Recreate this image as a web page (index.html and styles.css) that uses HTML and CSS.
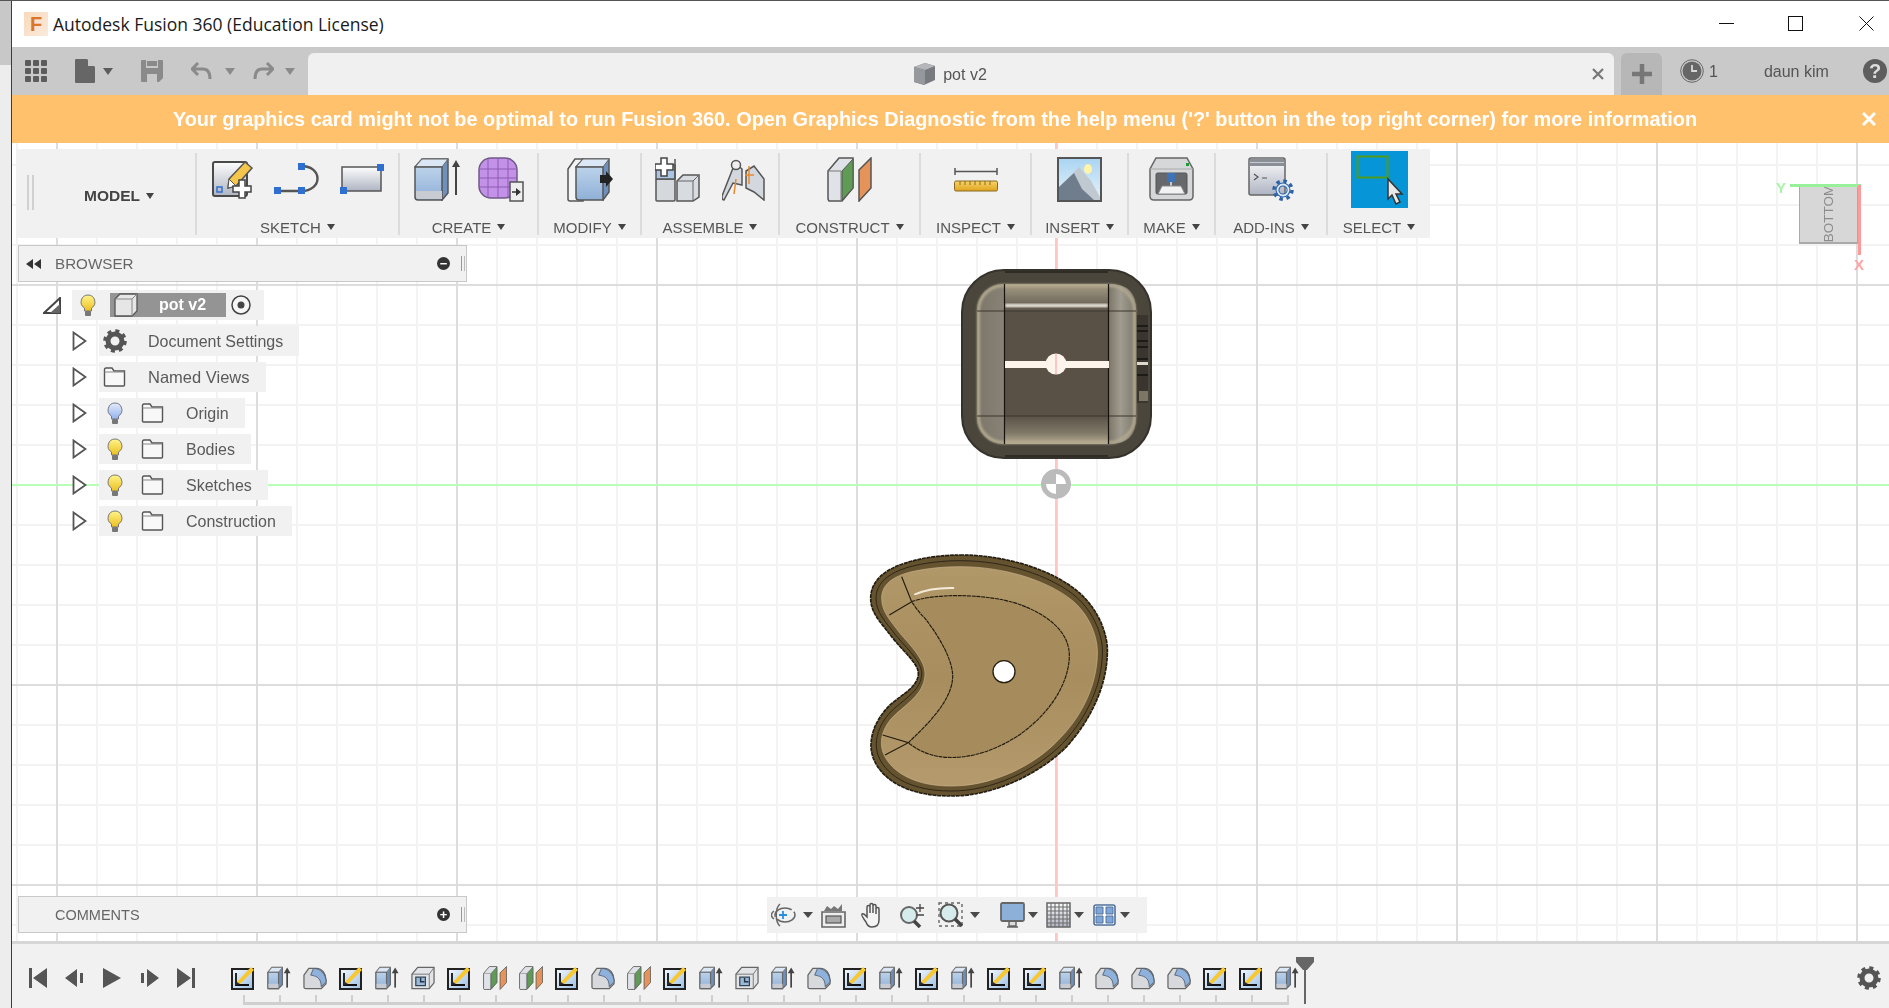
FILE: index.html
```html
<!DOCTYPE html>
<html lang="en">
<head>
<meta charset="utf-8">
<title>Autodesk Fusion 360 (Education License)</title>
<link rel="stylesheet" href="styles.css">
</head>
<body>
<svg class="sprite" aria-hidden="true">
  <defs>
    <linearGradient id="gGrey" x1="0" y1="0" x2="0" y2="1"><stop offset="0" stop-color="#fdfdfd"/><stop offset="1" stop-color="#aeb4c2"/></linearGradient>
    <linearGradient id="gBlue" x1="0" y1="0" x2="0" y2="1"><stop offset="0" stop-color="#bcd2ea"/><stop offset="1" stop-color="#8fb0d8"/></linearGradient>
    <linearGradient id="gSky" x1="0" y1="0" x2="0" y2="1"><stop offset="0" stop-color="#a9d4f2"/><stop offset="1" stop-color="#e8f3fa"/></linearGradient>
    <linearGradient id="gSketch" x1="0" y1="0" x2="1" y2="1"><stop offset="0" stop-color="#f5f8fc"/><stop offset="1" stop-color="#9cc0e6"/></linearGradient>
    <linearGradient id="gBulbY" x1="0" y1="0" x2="0" y2="1"><stop offset="0" stop-color="#fff48a"/><stop offset="1" stop-color="#ecc020"/></linearGradient>
    <linearGradient id="gBulbB" x1="0" y1="0" x2="0" y2="1"><stop offset="0" stop-color="#e4ecfb"/><stop offset="1" stop-color="#94b2ee"/></linearGradient>
    <linearGradient id="gRuler" x1="0" y1="0" x2="0" y2="1"><stop offset="0" stop-color="#f8d468"/><stop offset="1" stop-color="#e0a420"/></linearGradient>
    <linearGradient id="gBody" x1="0" y1="0" x2="0" y2="1"><stop offset="0" stop-color="#b19868"/><stop offset=".5" stop-color="#a88d5e"/><stop offset="1" stop-color="#b49a6c"/></linearGradient>
    <linearGradient id="gPotSide" x1="0" y1="0" x2="1" y2="0"><stop offset="0" stop-color="#7c776a"/><stop offset=".55" stop-color="#a09c8f"/><stop offset="1" stop-color="#7a7466"/></linearGradient>
    <linearGradient id="gPotSideR" x1="0" y1="0" x2="1" y2="0"><stop offset="0" stop-color="#7a7466"/><stop offset=".45" stop-color="#a09c8f"/><stop offset="1" stop-color="#7c776a"/></linearGradient>
    <linearGradient id="gPotTop" x1="0" y1="0" x2="0" y2="1"><stop offset="0" stop-color="#a89e84"/><stop offset=".55" stop-color="#7d7566"/><stop offset="1" stop-color="#5d5549"/></linearGradient>
    <linearGradient id="gPotBot" x1="0" y1="0" x2="0" y2="1"><stop offset="0" stop-color="#5a5247"/><stop offset=".6" stop-color="#7f7868"/><stop offset="1" stop-color="#b8ad92"/></linearGradient>

    <symbol id="i-sketch" viewBox="0 0 42 40">
      <rect x="1" y="3" width="34" height="34" rx="2" fill="url(#gGrey)" stroke="#4a4a4a" stroke-width="2"/>
      <rect x="5" y="28" width="5" height="5" fill="none" stroke="#2f6fd0" stroke-width="1.5"/>
      <path d="M17 20 33 3l7 6-16 18-8 2z" fill="#f5c64a" stroke="#555" stroke-width="1.5"/>
      <path d="M17 20l7 7-8 2z" fill="#fff" stroke="#555"/>
      <path d="M27 21h6v6h6v6h-6v6h-6v-6h-6v-6h6z" fill="#fff" stroke="#444" stroke-width="1.5"/>
    </symbol>
    <symbol id="i-spline" viewBox="0 0 46 33">
      <path d="M3 28H27C49 28 49 3 27 3" fill="none" stroke="#555" stroke-width="2.4"/>
      <rect x="0" y="24" width="7" height="7" fill="#2f6fd0"/>
      <rect x="24" y="24" width="7" height="7" fill="#2f6fd0"/>
      <rect x="24" y="0" width="7" height="7" fill="#2f6fd0"/>
    </symbol>
    <symbol id="i-rect" viewBox="0 0 44 30">
      <rect x="2" y="3" width="39" height="24" fill="url(#gGrey)" stroke="#555" stroke-width="1.5"/>
      <rect x="37" y="0" width="7" height="7" fill="#2f6fd0"/>
      <rect x="0" y="23" width="7" height="7" fill="#2f6fd0"/>
    </symbol>
    <symbol id="i-extrude" viewBox="0 0 47 45">
      <path d="M2 10 9 2H35V36L29 43Z" fill="#6f90ba" stroke="#555" stroke-width="1.5"/>
      <path d="M2 10 9 2H35L29 10Z" fill="#dbe7f5" stroke="#666"/>
      <path d="M2 10H29V43H5Q2 43 2 40Z" fill="url(#gBlue)" stroke="#555" stroke-width="1.5"/>
      <path d="M3 34H29V42H5Q3 42 3 40Z" fill="#c8ccd2"/>
      <path d="M43 38V7" stroke="#444" stroke-width="2"/>
      <path d="M39 10 43 3 47 10Z" fill="#444"/>
    </symbol>
    <symbol id="i-form" viewBox="0 0 47 45">
      <rect x="2" y="1" width="38" height="40" rx="12" fill="#c392e8" stroke="#6f5a86" stroke-width="1.5"/>
      <path d="M2 12H40M2 21H40M2 30H40M11 2V41M21 1V41M31 2V41" stroke="#8a5cb0" fill="none"/>
      <rect x="33" y="25" width="13" height="19" fill="#eee" stroke="#555" stroke-width="1.5"/>
      <path d="M35 35H41" stroke="#333" stroke-width="1.5"/><path d="M39 31 44 35 39 39Z" fill="#333"/>
    </symbol>
    <symbol id="i-modify" viewBox="0 0 46 45">
      <path d="M1 12 8 2H16V44H3Q1 44 1 42Z" fill="#f4f4f4" stroke="#555" stroke-width="1.5"/>
      <path d="M9 10 16 2H42V35L36 43Z" fill="#6f90ba" stroke="#555" stroke-width="1.5"/>
      <path d="M9 10 16 2H42L36 10Z" fill="#dbe7f5" stroke="#666"/>
      <path d="M9 10H36V43H12Q9 43 9 40Z" fill="url(#gBlue)" stroke="#555" stroke-width="1.5"/>
      <path d="M33 18H39V14L46 22 39 30V26H33Z" fill="#222"/>
    </symbol>
    <symbol id="i-assemble" viewBox="0 0 45 45">
      <rect x="1" y="22" width="19" height="22" rx="1" fill="#d5d8dc" stroke="#555" stroke-width="1.5"/>
      <path d="M22 24 28 18H44V40L38 44H22Z" fill="#d8dbe0" stroke="#555" stroke-width="1.5"/>
      <path d="M22 24H38V44M38 24 44 18" fill="none" stroke="#666"/>
      <path d="M1 8H20V22H1Z" fill="#a9c4e4" stroke="#555" stroke-width="1.5"/>
      <path d="M20 2V22" stroke="#555" stroke-width="1.5"/>
      <path d="M6 1h6v6h6v6h-6v6H6v-6H0V7h6z" fill="#fff" stroke="#444" stroke-width="1.5"/>
    </symbol>
    <symbol id="i-joint" viewBox="0 0 43 43">
      <path d="M13 5 20 11V27L11 25 2 42Q0 42 0 38Z" fill="#d3d7de" stroke="#555" stroke-width="1.5"/>
      <circle cx="14" cy="7" r="4.5" fill="#eee" stroke="#555" stroke-width="1.5"/>
      <path d="M24 13 32 8 42 21V42L32 34 24 30Z" fill="#d3d7de" stroke="#555" stroke-width="1.5"/>
      <path d="M14 21 12 36" stroke="#e98a2c" stroke-width="1.5"/>
      <path d="M27 8V26M23 17H32" stroke="#e98a2c" stroke-width="1.5" fill="none"/>
    </symbol>
    <symbol id="i-construct" viewBox="0 0 45 45">
      <path d="M1 14 12 1H26V31L15 44H2L1 42Z" fill="#dfe2e6" stroke="#555" stroke-width="1.5"/>
      <path d="M1 14H14V44" fill="none" stroke="#777"/>
      <path d="M15 14 26 2V31L15 43Z" fill="#5f9b55" stroke="#555"/>
      <path d="M32 13 44 1V31L32 44Z" fill="#e6935a" stroke="#555" stroke-width="1.5"/>
    </symbol>
    <symbol id="i-inspect" viewBox="0 0 44 26">
      <path d="M1 2V9M43 2V9" stroke="#555" stroke-width="1.5"/><path d="M1 5.500H43" stroke="#555" stroke-width="1.5"/>
      <rect x="0.500" y="15" width="43" height="10" rx="1.500" fill="url(#gRuler)" stroke="#8a6a20"/>
      <path d="M6 15V19M11 15V19M16 15V19M21 15V19M26 15V19M31 15V19M36 15V19" stroke="#8a6a20"/>
    </symbol>
    <symbol id="i-insert" viewBox="0 0 45 45">
      <rect x="1" y="1" width="43" height="43" fill="url(#gSky)" stroke="#555" stroke-width="2"/>
      <ellipse cx="31" cy="12" rx="4" ry="5" fill="#fff4a8"/>
      <path d="M2 43V30L22 10 34 24 43 40V43Z" fill="#c0c8d0"/>
      <path d="M2 43V30L17 16 25 32 37 43Z" fill="#6f7d8c"/>
    </symbol>
    <symbol id="i-make" viewBox="0 0 45 45">
      <path d="M7 1H38L44 12V39Q44 43 40 43H5Q1 43 1 39V12Z" fill="#d6d7d9" stroke="#666" stroke-width="1.5"/>
      <path d="M1 12H44" stroke="#aaa"/>
      <rect x="37" y="6" width="3" height="3" fill="#1d9b38"/>
      <rect x="7" y="16" width="31" height="21" rx="1.500" fill="#66686c" stroke="#555"/>
      <rect x="18" y="16" width="8" height="9" fill="#3f73b8"/>
      <path d="M22 25V30" stroke="#bcd" stroke-width="2"/>
      <path d="M13 29H32L36 37H9Z" fill="#f2f2f2" stroke="#888"/>
    </symbol>
    <symbol id="i-addins" viewBox="0 0 47 45">
      <rect x="1" y="1" width="36" height="37" rx="2" fill="url(#gGrey)" stroke="#666" stroke-width="1.5"/>
      <rect x="2" y="2" width="34" height="7" fill="#8a8e96"/><path d="M2 5.500H36" stroke="#c8ccd2"/>
      <path d="M6 17 10 20 6 23M14 21H19" fill="none" stroke="#555" stroke-width="1.2"/>
      <circle cx="35" cy="33" r="5.500" fill="none" stroke="#2f63a8" stroke-width="4"/>
      <circle cx="35" cy="33" r="9" fill="none" stroke="#2f63a8" stroke-width="3.500" stroke-dasharray="3.500 3.570"/>
      <circle cx="35" cy="33" r="5.500" fill="none" stroke="#dbe8f6" stroke-width="1.800"/>
    </symbol>
    <symbol id="i-select" viewBox="0 0 57 57">
      <rect x="6.500" y="5.500" width="30" height="21" fill="none" stroke="#4f9a1c" stroke-width="2"/>
      <path d="M37 28V48L41 44 45 53 49 51 45 43H51Z" fill="#e8e8e8" stroke="#333" stroke-width="1.500"/>
    </symbol>

    <symbol id="i-bulb-y" viewBox="0 0 16 23">
      <path d="M8 1a7 7 0 0 1 3.500 13V17h-7v-3A7 7 0 0 1 8 1z" fill="url(#gBulbY)" stroke="#777"/>
      <rect x="5" y="17" width="6" height="5" rx="1" fill="#777"/>
    </symbol>
    <symbol id="i-bulb-b" viewBox="0 0 16 23">
      <path d="M8 1a7 7 0 0 1 3.500 13V17h-7v-3A7 7 0 0 1 8 1z" fill="url(#gBulbB)" stroke="#778"/>
      <rect x="5" y="17" width="6" height="5" rx="1" fill="#777"/>
    </symbol>
    <symbol id="i-folder" viewBox="0 0 23 20">
      <path d="M1.500 2.500Q1.500 1 3 1H9L11 4H21.500V18Q21.500 19 20.500 19H2.500Q1.500 19 1.500 18Z" fill="#f8f8f8" stroke="#555" stroke-width="1.400"/>
      <path d="M1.500 5H21.500" stroke="#888"/>
    </symbol>
    <symbol id="i-gear" viewBox="0 0 24 24">
      <circle cx="12" cy="12" r="7" fill="none" stroke="currentColor" stroke-width="5"/>
      <circle cx="12" cy="12" r="10.200" fill="none" stroke="currentColor" stroke-width="3.200" stroke-dasharray="4 4.010"/>
    </symbol>

    <symbol id="t-sketch" viewBox="0 0 24 24">
      <rect x="1" y="3" width="21" height="20" fill="url(#gSketch)" stroke="#222" stroke-width="2"/>
      <path d="M5 7V19H18" fill="none" stroke="#111" stroke-width="1.800"/>
      <path d="M6 16 20 1l3 3L9 18Z" fill="#f8c82e"/>
      <path d="M6 16 9 18 5 19Z" fill="#333"/>
    </symbol>
    <symbol id="t-extrude" viewBox="0 0 25 24">
      <path d="M1 6 5 1H16V19L12 23H1Z" fill="#6f90ba" stroke="#666" stroke-width="1.200"/>
      <path d="M1 6 5 1H16L12 6Z" fill="#dbe7f5" stroke="#777" stroke-width=".8"/>
      <path d="M1 6H12V23H2Q1 23 1 22Z" fill="url(#gBlue)" stroke="#666" stroke-width="1.200"/>
      <path d="M1.600 18H12V22.400H1.600Z" fill="#c8ccd2"/>
      <path d="M21 22V5" stroke="#444" stroke-width="1.800"/>
      <path d="M17.500 7 21 1 24.500 7Z" fill="#444"/>
    </symbol>
    <symbol id="t-fillet" viewBox="0 0 25 24">
      <path d="M1 9 6 2H14C20 2 24 8 24 14V18L19 23H3Q1 23 1 21Z" fill="#d7d9dd" stroke="#666" stroke-width="1.300"/>
      <path d="M11 2C18 2 24 8 24 16L19 21C19 14 16 10 8 9Z" fill="#8fb2dc" stroke="#567"/>
    </symbol>
    <symbol id="t-shell" viewBox="0 0 25 24">
      <path d="M1 8 7 1H24V17L19 23H1Z" fill="#e2e4e8" stroke="#666" stroke-width="1.300"/>
      <path d="M1 8H19V23M19 8 24 1" fill="none" stroke="#777"/>
      <path d="M5 11H15V20H5Z" fill="#9cb8d8" stroke="#345" stroke-width="1.300"/>
      <path d="M10 12V16H14" fill="none" stroke="#234" stroke-width="1.500"/>
    </symbol>
    <filter id="fSoft" x="-10%" y="-10%" width="120%" height="120%"><feGaussianBlur stdDeviation="1"/></filter>
  </defs>
</svg>

<div class="desktop-edge"></div>
<div class="window">
  <header class="titlebar">
    <span class="app-logo">F</span>
    <span class="title-text">Autodesk Fusion 360 (Education License)</span>
    <div class="win-controls">
      <svg class="wc" viewBox="0 0 15 15"><path d="M0 7.500H15" stroke="#111" fill="none"/></svg>
      <svg class="wc wc-mid" viewBox="0 0 15 15"><rect x=".5" y=".5" width="14" height="14" stroke="#111" fill="none"/></svg>
      <svg class="wc" viewBox="0 0 15 15"><path d="M.5.5 14.500 14.500M14.500.5.5 14.500" stroke="#111" fill="none"/></svg>
    </div>
  </header>

  <div class="appbar">
    <svg class="ab-grid" viewBox="0 0 22 22" fill="#5c5c5c">
      <rect width="6" height="6" rx="1"/><rect x="8" width="6" height="6" rx="1"/><rect x="16" width="6" height="6" rx="1"/>
      <rect y="8" width="6" height="6" rx="1"/><rect x="8" y="8" width="6" height="6" rx="1"/><rect x="16" y="8" width="6" height="6" rx="1"/>
      <rect y="16" width="6" height="6" rx="1"/><rect x="8" y="16" width="6" height="6" rx="1"/><rect x="16" y="16" width="6" height="6" rx="1"/>
    </svg>
    <svg class="ab-file" viewBox="0 0 20 24"><path d="M1 0H12L20 8V23Q20 24 19 24H1Q0 24 0 23V1Q0 0 1 0Z" fill="#666"/><path d="M13 0 20 7H13Z" fill="#c8c8c8"/></svg>
    <span class="caret caret-ab ab-c1"></span>
    <svg class="ab-save" viewBox="0 0 22 22"><path d="M1 0H21Q22 0 22 1V18L18 22H1Q0 22 0 21V1Q0 0 1 0Z" fill="#8a8a8a"/><rect x="5" y="0" width="12" height="8" fill="#c8c8c8"/><rect x="6" y="1" width="10" height="5" fill="#8a8a8a"/><rect x="6" y="14" width="10" height="8" fill="#c8c8c8"/></svg>
    <svg class="ab-undo" viewBox="0 0 21 18"><path d="M7 1 1 7 7 13M2 7H12C17 7 19 11 19 17" fill="none" stroke="#8a8a8a" stroke-width="3"/></svg>
    <span class="caret caret-ab caret-dim ab-c2"></span>
    <svg class="ab-redo" viewBox="0 0 21 18"><path d="M14 1 20 7 14 13M19 7H9C4 7 2 11 2 17" fill="none" stroke="#8a8a8a" stroke-width="3"/></svg>
    <span class="caret caret-ab caret-dim ab-c3"></span>
    <div class="tab">
      <span></span>
      <div class="tab-title">
        <svg class="tab-cube" viewBox="0 0 24 24"><path d="M2 5 13 1 23 4V18L12 23 2 20Z" fill="#777b80"/><path d="M2 5 13 8 23 4 13 1Z" fill="#b4b6b9"/><path d="M2 5 13 8V23L2 20Z" fill="#95989c"/></svg>
        <span>pot v2</span>
      </div>
      <svg class="tab-close" viewBox="0 0 12 12"><path d="M1 1 11 11M11 1 1 11" stroke="#777" stroke-width="2.200" fill="none"/></svg>
    </div>
    <div class="tab-add"><svg viewBox="0 0 20 20"><path d="M10 0V20M0 10H20" stroke="#777" stroke-width="4.500"/></svg></div>
    <svg class="ab-clock" viewBox="0 0 24 24"><circle cx="12" cy="12" r="11.300" fill="none" stroke="#666"/><circle cx="12" cy="12" r="9.500" fill="#666"/><path d="M12 6V12H17" fill="none" stroke="#d8d8d8" stroke-width="1.800"/></svg>
    <span class="ab-count">1</span>
    <span class="ab-user">daun kim</span>
    <span class="ab-help">?</span>
  </div>

  <div class="banner">
    <p class="banner-text">Your graphics card might not be optimal to run Fusion 360. Open Graphics Diagnostic from the help menu ('?' button in the top right corner) for more information</p>
    <svg class="banner-close" viewBox="0 0 14 14"><path d="M1 1 13 13M13 1 1 13" stroke="#fff" stroke-width="3" fill="none"/></svg>
  </div>

  <main class="viewport">
    <div class="axis axis-y"></div>
    <div class="axis axis-x"></div>

    <svg class="model model-pot" viewBox="0 0 191 190">
      <rect x="1" y="1" width="189" height="188" rx="42" fill="#4b463c" stroke="#35322b" stroke-width="2"/>
      <path d="M44 3H147" stroke="#2f2c26" stroke-width="2"/><path d="M44 187H147" stroke="#2f2c26" stroke-width="2"/>
      <rect x="16" y="15" width="159" height="160" rx="26" fill="url(#gPotSide)"/>
      <path d="M147 15H149Q175 15 175 41V149Q175 175 149 175H147Z" fill="url(#gPotSideR)"/>
      <rect x="44" y="15" width="103" height="27" fill="url(#gPotTop)"/>
      <rect x="44" y="35" width="103" height="3" fill="#f4f0e6" filter="url(#fSoft)"/>
      <rect x="44" y="42" width="103" height="105" fill="#595146"/>
      <rect x="44" y="147" width="103" height="28" fill="url(#gPotBot)"/>
      <rect x="17.500" y="16.500" width="156" height="157" rx="25" fill="none" stroke="#b3a98f" stroke-width="3" filter="url(#fSoft)"/>
      <path d="M16 42H175M16 147H175" stroke="#3a362e" stroke-width="1"/>
      <path d="M43.500 15V175M147.500 15V175" stroke="#16130f" stroke-width="1.200"/>
      <rect x="44" y="92" width="104" height="7" fill="#fdf5ec"/>
      <circle cx="95" cy="95" r="10.500" fill="#fdf5ec"/>
      <path d="M95 85V105" stroke="#ffc4c4" stroke-width="2"/>
      <rect x="176" y="46" width="11" height="88" fill="#3a362f"/>
      <path d="M176 57H187M176 62H187M176 72H187M176 78H187M176 90H187M176 106H187" stroke="#1d1b17" stroke-width="2"/>
      <rect x="176" y="93" width="11" height="3" fill="#ddd9cc"/>
      <rect x="178" y="122" width="9" height="10" fill="#7d7566"/>
    </svg>

    <svg class="model model-origin" viewBox="0 0 30 30">
      <circle cx="15" cy="15" r="12.500" fill="#fff" stroke="#bbb" stroke-width="5"/>
      <path d="M15 15V2A13 13 0 0 0 2 15ZM15 15V28A13 13 0 0 0 28 15Z" fill="#bbb"/>
    </svg>

    <svg class="model model-kidney" viewBox="0 0 840 810">
      <path d="M330 45C470 45 610 90 690 160C750 215 775 290 772 340C770 430 730 530 650 620C570 700 430 770 300 768C190 768 100 730 70 655C50 600 75 540 120 495C160 460 205 440 205 400C205 370 160 335 125 290C95 250 62 220 62 175C62 120 110 85 170 68C220 52 280 45 330 45Z" fill="#65522f" stroke="#231d10" stroke-width="5" stroke-dasharray="12 2"/>
      <path d="M330 62C465 62 600 105 678 170C735 220 760 292 757 342C755 428 718 525 638 610C560 690 425 755 300 753C195 753 112 715 85 648C68 600 88 548 130 508C170 472 215 448 215 400C215 365 170 325 137 285C107 245 78 218 78 175C78 128 118 98 177 81C225 68 280 62 330 62Z" fill="none" stroke="#2e2718" stroke-width="3"/>
      <path d="M330 80C460 80 590 120 665 180C720 225 745 295 742 345C740 425 705 520 625 600C550 680 420 740 300 738C200 738 125 700 100 640C85 600 100 555 140 520C180 485 225 455 225 400C225 360 180 315 150 280C120 240 95 215 95 175C95 135 125 110 185 95C230 85 280 80 330 80Z" fill="url(#gBody)" stroke="#c9b48e" stroke-width="2"/>
      <path d="M185 185C250 160 400 160 500 190C600 225 660 280 658 350C655 440 590 530 500 590C420 640 340 660 270 650C230 645 195 625 175 608C230 555 310 480 308 405C305 350 260 280 225 235C205 215 195 200 185 185Z" fill="#a68b5c" stroke="#231d10" stroke-width="3.500" stroke-dasharray="12 2"/>
      <path d="M155 110 185 185 118 225M98 585 175 608 105 645" fill="none" stroke="#231d10" stroke-width="3.500"/>
      <path d="M195 163C230 148 270 143 310 144" fill="none" stroke="#f3ead8" stroke-width="6" stroke-linecap="round" filter="url(#fSoft)"/>
      <circle cx="462" cy="395" r="33" fill="#fff" stroke="#231d10" stroke-width="4"/>
    </svg>

    <div class="viewcube">
      <div class="vc-face"><span class="vc-text">BOTTOM</span></div>
      <span class="vc-line-y"></span>
      <span class="vc-line-x"></span>
      <span class="vc-y">Y</span>
      <span class="vc-x">X</span>
    </div>

    <nav class="toolbar">
      <div class="tb-group tb-model">
        <span class="grip"></span>
        <span class="model-label">MODEL</span>
        <span class="caret caret-sm"></span>
      </div>
      <span class="tb-sep"></span>
      <div class="tb-group w-sketch">
        <div class="tb-icons gap20">
          <svg class="ic w42 h40"><use href="#i-sketch"/></svg>
          <svg class="ic w46 h33"><use href="#i-spline"/></svg>
          <svg class="ic w44 h30"><use href="#i-rect"/></svg>
        </div>
        <div class="tb-label">SKETCH<span class="caret caret-sm"></span></div>
      </div>
      <span class="tb-sep"></span>
      <div class="tb-group w-create">
        <div class="tb-icons gap17">
          <svg class="ic w47 h45"><use href="#i-extrude"/></svg>
          <svg class="ic w47 h45"><use href="#i-form"/></svg>
        </div>
        <div class="tb-label">CREATE<span class="caret caret-sm"></span></div>
      </div>
      <span class="tb-sep"></span>
      <div class="tb-group w-modify">
        <div class="tb-icons"><svg class="ic w46 h45"><use href="#i-modify"/></svg></div>
        <div class="tb-label">MODIFY<span class="caret caret-sm"></span></div>
      </div>
      <span class="tb-sep"></span>
      <div class="tb-group w-assemble">
        <div class="tb-icons gap22">
          <svg class="ic w45 h45"><use href="#i-assemble"/></svg>
          <svg class="ic w43 h43"><use href="#i-joint"/></svg>
        </div>
        <div class="tb-label">ASSEMBLE<span class="caret caret-sm"></span></div>
      </div>
      <span class="tb-sep"></span>
      <div class="tb-group w-construct">
        <div class="tb-icons"><svg class="ic w45 h45"><use href="#i-construct"/></svg></div>
        <div class="tb-label">CONSTRUCT<span class="caret caret-sm"></span></div>
      </div>
      <span class="tb-sep"></span>
      <div class="tb-group w-inspect">
        <div class="tb-icons"><svg class="ic w44 h26"><use href="#i-inspect"/></svg></div>
        <div class="tb-label">INSPECT<span class="caret caret-sm"></span></div>
      </div>
      <span class="tb-sep"></span>
      <div class="tb-group w-insert">
        <div class="tb-icons"><svg class="ic w45 h45"><use href="#i-insert"/></svg></div>
        <div class="tb-label">INSERT<span class="caret caret-sm"></span></div>
      </div>
      <span class="tb-sep"></span>
      <div class="tb-group w-make">
        <div class="tb-icons"><svg class="ic w45 h45"><use href="#i-make"/></svg></div>
        <div class="tb-label">MAKE<span class="caret caret-sm"></span></div>
      </div>
      <span class="tb-sep"></span>
      <div class="tb-group w-addins">
        <div class="tb-icons"><svg class="ic w47 h45"><use href="#i-addins"/></svg></div>
        <div class="tb-label">ADD-INS<span class="caret caret-sm"></span></div>
      </div>
      <span class="tb-sep"></span>
      <div class="tb-group w-select">
        <div class="tb-icons"><svg class="ic select-tile"><use href="#i-select"/></svg></div>
        <div class="tb-label">SELECT<span class="caret caret-sm"></span></div>
      </div>
    </nav>

    <aside class="browser">
      <div class="panel-head">
        <svg class="ph-back" viewBox="0 0 15 10"><path d="M7 0V10L0 5ZM15 0V10L8 5Z" fill="#333"/></svg>
        <span class="ph-title">BROWSER</span>
        <span class="ph-btn">&#8722;</span>
        <span class="ph-grip"></span>
      </div>
      <ul class="tree">
        <li class="tree-root">
          <svg class="root-tri" viewBox="0 0 18 17"><path d="M17 1V16H1Z" fill="#fff" stroke="#444" stroke-width="2"/><path d="M17 7V16H7Z" fill="#666"/></svg>
          <div class="pill pill-root">
            <svg class="bulb"><use href="#i-bulb-y"/></svg>
            <div class="root-label">
              <svg class="root-cube" viewBox="0 0 24 24"><path d="M1 6 6 1H23V18L18 23H1Z" fill="#e6e6e6" stroke="#555" stroke-width="1.300"/><path d="M1 6H18V23M18 6 23 1" fill="none" stroke="#888"/></svg>
              <span>pot v2</span>
            </div>
            <svg class="radio" viewBox="0 0 20 20"><circle cx="10" cy="10" r="9" fill="#f6f6f6" stroke="#444" stroke-width="1.500"/><circle cx="10" cy="10" r="3.500" fill="#444"/></svg>
          </div>
        </li>
        <li class="tree-row">
          <svg class="expander" viewBox="0 0 15 20"><path d="M1.500 1.500 13.500 10 1.500 18.500Z" fill="#fff" stroke="#555" stroke-width="1.800"/></svg>
          <div class="pill">
            <svg class="row-gear"><use href="#i-gear"/></svg>
            <span class="row-text after-plain">Document Settings</span>
          </div>
        </li>
        <li class="tree-row">
          <svg class="expander" viewBox="0 0 15 20"><path d="M1.500 1.500 13.500 10 1.500 18.500Z" fill="#fff" stroke="#555" stroke-width="1.800"/></svg>
          <div class="pill">
            <svg class="folder folder-first"><use href="#i-folder"/></svg>
            <span class="row-text after-folder1">Named Views</span>
          </div>
        </li>
        <li class="tree-row">
          <svg class="expander" viewBox="0 0 15 20"><path d="M1.500 1.500 13.500 10 1.500 18.500Z" fill="#fff" stroke="#555" stroke-width="1.800"/></svg>
          <div class="pill">
            <svg class="bulb"><use href="#i-bulb-b"/></svg>
            <svg class="folder"><use href="#i-folder"/></svg>
            <span class="row-text after-folder">Origin</span>
          </div>
        </li>
        <li class="tree-row">
          <svg class="expander" viewBox="0 0 15 20"><path d="M1.500 1.500 13.500 10 1.500 18.500Z" fill="#fff" stroke="#555" stroke-width="1.800"/></svg>
          <div class="pill">
            <svg class="bulb"><use href="#i-bulb-y"/></svg>
            <svg class="folder"><use href="#i-folder"/></svg>
            <span class="row-text after-folder">Bodies</span>
          </div>
        </li>
        <li class="tree-row">
          <svg class="expander" viewBox="0 0 15 20"><path d="M1.500 1.500 13.500 10 1.500 18.500Z" fill="#fff" stroke="#555" stroke-width="1.800"/></svg>
          <div class="pill">
            <svg class="bulb"><use href="#i-bulb-y"/></svg>
            <svg class="folder"><use href="#i-folder"/></svg>
            <span class="row-text after-folder">Sketches</span>
          </div>
        </li>
        <li class="tree-row">
          <svg class="expander" viewBox="0 0 15 20"><path d="M1.500 1.500 13.500 10 1.500 18.500Z" fill="#fff" stroke="#555" stroke-width="1.800"/></svg>
          <div class="pill">
            <svg class="bulb"><use href="#i-bulb-y"/></svg>
            <svg class="folder"><use href="#i-folder"/></svg>
            <span class="row-text after-folder">Construction</span>
          </div>
        </li>
      </ul>
    </aside>

    <aside class="comments panel-head">
      <span class="ph-title ph-title-comments">COMMENTS</span>
      <span class="ph-btn">+</span>
      <span class="ph-grip"></span>
    </aside>

    <div class="navbar">
      <svg class="nv" viewBox="0 0 25 26"><ellipse cx="14" cy="13" rx="10" ry="7" fill="none" stroke="#666" stroke-width="1.500" stroke-dasharray="22 3"/><path d="M9 2C4 6 4 20 9 24" fill="none" stroke="#666" stroke-width="1.500"/><path d="M3 9C-1 12 0 15 3 17" fill="none" stroke="#666" stroke-width="1.500"/><path d="M12 9V17M8 13H16" stroke="#2a8ee0" stroke-width="1.800"/></svg>
      <span class="caret caret-nav ml7"></span>
      <svg class="nv ml8" viewBox="0 0 25 26"><path d="M1 10H24V25H1Z" fill="#eee" stroke="#666" stroke-width="1.600"/><path d="M3 9 6 4 10 7 13 4 17 7 21 2V9Z" fill="#777"/><rect x="5" y="14" width="15" height="7" fill="#aaa" stroke="#555" stroke-width="1.200"/></svg>
      <svg class="nv ml14" viewBox="0 0 25 26"><path d="M6 20C3 16 1 13 2 12C4 11 5 13 7 15V5C7 3 10 3 10 5V11V3C10 1 13 1 13 3V11V4C13 2 16 2 16 4V12V7C16 5 19 5 19 7V18C19 22 17 25 12 25C9 25 7 23 6 20Z" fill="#f4f4f4" stroke="#555" stroke-width="1.500"/></svg>
      <svg class="nv ml14" viewBox="0 0 25 26"><circle cx="10" cy="13" r="8" fill="#d6ecec" stroke="#666" stroke-width="2"/><path d="M15 19 21 25" stroke="#444" stroke-width="3.500"/><path d="M21 2V10M17 6H25M17 13H25" stroke="#444" stroke-width="1.300"/></svg>
      <svg class="nv ml14" viewBox="0 0 25 26"><path d="M1 1H24V24H1Z" fill="none" stroke="#666" stroke-dasharray="3 3" stroke-width="1.400"/><circle cx="11" cy="11" r="8.500" fill="#d6ecec" stroke="#555" stroke-width="2"/><path d="M17 17 24 24" stroke="#444" stroke-width="3.500"/></svg>
      <span class="caret caret-nav ml7"></span>
      <svg class="nv ml20" viewBox="0 0 25 26"><rect x="1" y="1" width="23" height="18" rx="1.500" fill="#8cb0d8" stroke="#666" stroke-width="1.800"/><path d="M9 20V24H16V20M7 25H18" fill="#ddd" stroke="#666" stroke-width="1.500"/></svg>
      <span class="caret caret-nav ml3"></span>
      <svg class="nv ml8" viewBox="0 0 25 26"><rect x="1" y="1" width="23" height="24" fill="url(#gGrey)" stroke="#666" stroke-width="1.500"/><path d="M5 1V25M9 1V25M13 1V25M17 1V25M21 1V25M1 5H24M1 9H24M1 13H24M1 17H24M1 21H24" stroke="#6d6d6d" stroke-width="1.100" fill="none"/></svg>
      <span class="caret caret-nav ml3"></span>
      <svg class="nv nv-views ml9" viewBox="0 0 23 22"><rect x="1" y="1" width="21" height="20" rx="2" fill="#fff" stroke="#51719c" stroke-width="1.600"/><path d="M3 3H10V10H3ZM13 3H20V10H13ZM3 12H10V19H3ZM13 12H20V19H13Z" fill="#7ea6d8" stroke="#51719c"/></svg>
      <span class="caret caret-nav ml4"></span>
    </div>
  </main>

  <footer class="timeline">
    <div class="playback">
      <svg class="pb" viewBox="0 0 18 20"><path d="M0 0H3V20H0ZM18 0V20L4 10Z" fill="#555"/></svg>
      <svg class="pb pb-wide" viewBox="0 0 20 20"><path d="M12 1V19L0 10ZM15 5H18V15H15Z" fill="#555"/></svg>
      <svg class="pb" viewBox="0 0 18 20"><path d="M0 0 18 10 0 20Z" fill="#555"/></svg>
      <svg class="pb pb-wide" viewBox="0 0 20 20"><path d="M8 1 20 10 8 19ZM2 5H5V15H2Z" fill="#555"/></svg>
      <svg class="pb" viewBox="0 0 18 20"><path d="M15 0H18V20H15ZM0 0 14 10 0 20Z" fill="#555"/></svg>
    </div>
    <div class="track">
      <div class="tl-items">
        <svg class="ti"><use href="#t-sketch"/></svg>
        <svg class="ti"><use href="#t-extrude"/></svg>
        <svg class="ti"><use href="#t-fillet"/></svg>
        <svg class="ti"><use href="#t-sketch"/></svg>
        <svg class="ti"><use href="#t-extrude"/></svg>
        <svg class="ti"><use href="#t-shell"/></svg>
        <svg class="ti"><use href="#t-sketch"/></svg>
        <svg class="ti"><use href="#i-construct"/></svg>
        <svg class="ti"><use href="#i-construct"/></svg>
        <svg class="ti"><use href="#t-sketch"/></svg>
        <svg class="ti"><use href="#t-fillet"/></svg>
        <svg class="ti"><use href="#i-construct"/></svg>
        <svg class="ti"><use href="#t-sketch"/></svg>
        <svg class="ti"><use href="#t-extrude"/></svg>
        <svg class="ti"><use href="#t-shell"/></svg>
        <svg class="ti"><use href="#t-extrude"/></svg>
        <svg class="ti"><use href="#t-fillet"/></svg>
        <svg class="ti"><use href="#t-sketch"/></svg>
        <svg class="ti"><use href="#t-extrude"/></svg>
        <svg class="ti"><use href="#t-sketch"/></svg>
        <svg class="ti"><use href="#t-extrude"/></svg>
        <svg class="ti"><use href="#t-sketch"/></svg>
        <svg class="ti"><use href="#t-sketch"/></svg>
        <svg class="ti"><use href="#t-extrude"/></svg>
        <svg class="ti"><use href="#t-fillet"/></svg>
        <svg class="ti"><use href="#t-fillet"/></svg>
        <svg class="ti"><use href="#t-fillet"/></svg>
        <svg class="ti"><use href="#t-sketch"/></svg>
        <svg class="ti"><use href="#t-sketch"/></svg>
        <svg class="ti"><use href="#t-extrude"/></svg>
      </div>
      <div class="tl-rail"></div>
      <svg class="tl-marker" viewBox="0 0 18 47"><path d="M0 0H18V5L11 13H10V47H8V13H7L0 5Z" fill="#666"/></svg>
    </div>
    <svg class="tl-gear"><use href="#i-gear"/></svg>
  </footer>
</div>
</body>
</html>
```

FILE: styles.css
```css
* { box-sizing: border-box; }

html, body {
  margin: 0;
  width: 1889px;
  height: 1008px;
  overflow: hidden;
}

body {
  display: flex;
  font-family: "Liberation Sans", Arial, sans-serif;
  color: #555;
  background: #efefef;
  border-top: 1px solid #555;
}

.sprite {
  position: absolute;
  width: 0;
  height: 0;
}

.desktop-edge {
  flex: 0 0 11px;
  background: linear-gradient(#c8c8c8 0 64px, #ededed 64px);
}

.window {
  flex: 1;
  min-width: 0;
  display: flex;
  flex-direction: column;
  border-left: 1px solid #3c3c3c;
  background: #fff;
}

/* Title bar */
.titlebar {
  flex: 0 0 46px;
  display: flex;
  align-items: center;
  padding: 0 15px 0 12px;
  background: #fff;
}

.app-logo {
  width: 24px;
  height: 24px;
  margin-right: 5px;
  background: linear-gradient(135deg, #f8d9bd, #fbeadc);
  color: #d9762a;
  font: bold 20px/24px "Liberation Sans", sans-serif;
  text-align: center;
}

.title-text {
  font-family: "Open Sans", "Noto Sans", sans-serif;
  font-size: 17.5px;
  color: #1a1a1a;
  white-space: nowrap;
}

.win-controls {
  margin-left: auto;
  display: flex;
  align-items: center;
  transform: translateY(-1px);
}

.wc { width: 15px; height: 15px; }
.wc-mid { margin: 0 56px 0 54px; }

/* App bar */
.appbar {
  flex: 0 0 48px;
  display: flex;
  align-items: center;
  padding-left: 13px;
  background: #c9c9c9;
  filter: blur(.35px);
}

.ab-grid { width: 22px; height: 22px; }
.ab-file { width: 20px; height: 24px; margin-left: 28px; }
.ab-c1 { margin-left: 8px; }
.ab-save { width: 22px; height: 22px; margin-left: 28px; }
.ab-undo { width: 21px; height: 18px; margin-left: 28px; }
.ab-c2 { margin-left: 13px; }
.ab-redo { width: 21px; height: 18px; margin-left: 18px; }
.ab-c3 { margin-left: 11px; }

.tab {
  align-self: flex-end;
  width: 1306px;
  height: 42px;
  margin-left: 13px;
  display: grid;
  grid-template-columns: 1fr auto 1fr;
  align-items: center;
  background: #f0f0f0;
  border-radius: 6px 6px 0 0;
}

.tab-title {
  display: flex;
  align-items: center;
  gap: 7px;
  margin-right: 23px;
  font-size: 16px;
  color: #555;
}

.tab-title span { padding-top: 2px; }

.tab-cube { width: 24px; height: 24px; }
.tab-close { width: 12px; height: 12px; justify-self: end; margin-right: 10px; }

.tab-add {
  align-self: flex-end;
  width: 41px;
  height: 42px;
  margin-left: 7px;
  display: flex;
  align-items: center;
  justify-content: center;
  background: #b7b7b7;
  border-radius: 6px 6px 0 0;
}

.tab-add svg { width: 20px; height: 20px; }

.ab-clock { width: 24px; height: 24px; margin-left: 18px; }
.ab-count { margin-left: 5px; padding-top: 1px; font-size: 16px; color: #555; }
.ab-user { margin-left: 46px; padding-top: 1px; font-size: 16px; color: #555; white-space: nowrap; }

.ab-help {
  width: 24px;
  height: 24px;
  margin-left: auto;
  margin-right: 2px;
  border-radius: 50%;
  background: #5e5e5e;
  color: #ddd;
  font: bold 20px/24px "Liberation Sans", sans-serif;
  text-align: center;
}

/* Carets */
.caret {
  display: inline-block;
  flex: none;
  width: 0;
  height: 0;
  border-style: solid;
  border-color: #444 transparent transparent;
}

.caret-sm { border-width: 6px 4.5px 0; margin-left: 6px; vertical-align: 3px; }
.caret-ab { border-width: 7px 5px 0; border-top-color: #5c5c5c; }
.caret-dim { border-top-color: #8a8a8a; }
.caret-nav { border-width: 6px 5px 0; border-top-color: #4a4a4a; }

.ml3 { margin-left: 3px; }
.ml4 { margin-left: 4px; }
.ml7 { margin-left: 7px; }
.ml8 { margin-left: 8px; }
.ml9 { margin-left: 9px; }
.ml14 { margin-left: 14px; }
.ml20 { margin-left: 20px; }

/* Banner */
.banner {
  flex: 0 0 48px;
  display: flex;
  align-items: center;
  background: #ffc16b;
  filter: blur(.35px);
}

.banner-text {
  flex: 1;
  margin: 0;
  padding-left: 9px;
  text-align: center;
  color: #fff;
  font-size: 19.9px;
  font-weight: 700;
  white-space: nowrap;
}

.banner-close { width: 14px; height: 14px; margin: 0 13px; }

/* Viewport */
.viewport {
  flex: 1;
  position: relative;
  overflow: hidden;
  filter: blur(.35px);
  background-color: #fff;
  background-image:
    linear-gradient(90deg, #dddddd 2px, transparent 2px),
    linear-gradient(#dddddd 2px, transparent 2px),
    linear-gradient(90deg, #f3f3f3 2px, transparent 2px),
    linear-gradient(#f3f3f3 2px, transparent 2px);
  background-size: 200px 100%, 100% 200px, 40px 100%, 100% 40px;
  background-position: 44px 0, 0 141px, 4px 0, 0 21px;
}

.axis { position: absolute; }
.axis-y { left: 1043px; top: 0; bottom: 0; width: 2px; background: #ffc6c6; }
.axis-x { left: 0; right: 0; top: 341px; height: 2px; background: #b8ffb8; }

.model { position: absolute; }
.model-pot { left: 949px; top: 126px; width: 191px; height: 190px; }
.model-origin { left: 1029px; top: 326px; width: 30px; height: 30px; }
.model-kidney { left: 838px; top: 397px; width: 280px; height: 270px; }

.viewcube {
  position: absolute;
  left: 1765px;
  top: 36px;
  width: 100px;
  height: 95px;
}

.vc-face {
  position: absolute;
  left: 22px;
  top: 6px;
  width: 59px;
  height: 59px;
  display: flex;
  align-items: center;
  justify-content: center;
  background: #d7d7d7;
  border: 1px solid #aaa;
  border-top: 0;
  border-bottom-width: 2px;
}

.vc-text {
  transform: rotate(-90deg);
  font-size: 13.5px;
  color: #8c8c8c;
}

.vc-line-y { position: absolute; left: 13px; top: 5px; width: 71px; height: 3px; background: #98f098; }
.vc-line-x { position: absolute; left: 81px; top: 6px; width: 3px; height: 70px; background: #ff9a9a; }
.vc-y { position: absolute; left: -1px; top: 0; font-size: 15px; font-weight: 700; color: #a8f5a8; }
.vc-x { position: absolute; left: 77px; top: 77px; font-size: 15px; font-weight: 700; color: #ffa4a4; }

/* Toolbar */
.toolbar {
  position: absolute;
  left: 4px;
  top: 6px;
  width: 1414px;
  height: 89px;
  display: flex;
  background: #f1f1f1;
}

.tb-sep {
  flex: 0 0 2px;
  margin: 4px 0 3px;
  background: #dcdcdc;
}

.tb-group {
  flex: none;
  display: flex;
  flex-direction: column;
  align-items: center;
}

.tb-model {
  width: 179px;
  flex-direction: row;
  padding: 4px 0 0 11px;
  color: #444;
}

.grip {
  width: 7px;
  height: 35px;
  margin-top: -6px;
  border-left: 2px solid #d0d0d0;
  border-right: 2px solid #d0d0d0;
}

.model-label {
  margin-left: 50px;
  font-size: 15.5px;
  font-weight: 700;
  color: #444;
}

.w-sketch { width: 201px; }
.w-create { width: 137px; }
.w-modify { width: 101px; }
.w-assemble { width: 136px; }
.w-construct { width: 139px; }
.w-inspect { width: 109px; }
.w-insert { width: 95px; }
.w-make { width: 85px; }
.w-addins { width: 110px; }
.w-select { width: 102px; }

.tb-icons {
  height: 60px;
  display: flex;
  align-items: center;
}

.gap17 { gap: 17px; }
.gap20 { gap: 20px; }
.gap22 { gap: 22px; }

.tb-label {
  margin-top: 9px;
  height: 20px;
  line-height: 20px;
  font-size: 15px;
  color: #555;
  white-space: nowrap;
}

.ic { display: block; flex: none; }
.w42 { width: 42px; }
.w43 { width: 43px; }
.w44 { width: 44px; }
.w45 { width: 45px; }
.w46 { width: 46px; }
.w47 { width: 47px; }
.h26 { height: 26px; }
.h30 { height: 30px; }
.h33 { height: 33px; }
.h40 { height: 40px; }
.h43 { height: 43px; }
.h45 { height: 45px; }

.select-tile {
  width: 57px;
  height: 57px;
  background: #0696d7;
}

/* Panels */
.browser {
  position: absolute;
  left: 6px;
  top: 102px;
  width: 449px;
}

.panel-head {
  height: 37px;
  display: flex;
  align-items: center;
  padding-left: 7px;
  background: #f1f1f1;
  border: 1px solid #c8c8c8;
}

.ph-back { width: 15px; height: 10px; flex: none; }

.ph-title {
  margin-left: 14px;
  font-size: 15.2px;
  color: #666;
}

.ph-title-comments { margin-left: 29px; font-size: 14.5px; }

.ph-btn {
  width: 13px;
  height: 13px;
  margin-left: auto;
  margin-right: 11px;
  border-radius: 50%;
  background: #333;
  color: #fff;
  font: bold 13px/13px "Liberation Sans", sans-serif;
  text-align: center;
}

.ph-grip {
  width: 4px;
  height: 15px;
  margin-right: 1px;
  border-left: 1px solid #999;
  border-right: 1px solid #bbb;
}

.comments {
  position: absolute;
  left: 6px;
  top: 753px;
  width: 449px;
}

.tree {
  list-style: none;
  margin: 8px 0 0;
  padding: 0;
  display: flex;
  flex-direction: column;
  gap: 6px;
}

.tree-root {
  display: flex;
  align-items: center;
  padding-left: 25px;
}

.root-tri { width: 18px; height: 17px; margin-right: 11px; }

.tree-row {
  display: flex;
  align-items: center;
  padding-left: 54px;
}

.expander { width: 15px; height: 20px; margin-right: 12px; flex: none; }

.pill {
  height: 30px;
  display: flex;
  align-items: center;
  padding: 0 16px 0 4px;
  background: #f1f1f1;
}

.pill-root { padding: 0 13px 0 8px; }

.bulb {
  width: 16px;
  height: 23px;
  flex: none;
  margin-left: 4px;
}

.pill-root .bulb { margin-left: 0; }

.root-label {
  width: 116px;
  height: 24px;
  margin-left: 14px;
  display: flex;
  align-items: center;
  background: #949494;
  padding-left: 4px;
  color: #fff;
  font-size: 16px;
  font-weight: 700;
}

.root-cube { width: 24px; height: 24px; margin-right: 21px; flex: none; }

.radio { width: 20px; height: 20px; margin-left: 5px; }

.row-gear { width: 24px; height: 24px; color: #555; }

.folder { width: 23px; height: 20px; flex: none; margin-left: 18px; }
.folder-first { margin-left: 0; }

.row-text {
  padding-top: 1px;
  font-size: 16px;
  color: #5a5a5a;
  white-space: nowrap;
}

.after-plain { margin-left: 21px; }
.after-folder1 { margin-left: 22px; font-size: 16.5px; }
.after-folder { margin-left: 22px; }

/* Navigation bar */
.navbar {
  position: absolute;
  left: 755px;
  top: 754px;
  width: 380px;
  height: 36px;
  display: flex;
  align-items: center;
  padding-left: 4px;
  background: #f1f1f1;
}

.nv { width: 25px; height: 26px; flex: none; }
.nv-views { width: 23px; height: 22px; }

/* Timeline */
.timeline {
  flex: 0 0 67px;
  display: flex;
  align-items: flex-start;
  background: #f1f1f1;
  border-top: 3px solid #d6d6d6;
  padding-top: 22px;
  filter: blur(.35px);
}

.playback {
  height: 24px;
  margin-left: 17px;
  display: flex;
  align-items: center;
  gap: 18px;
}

.pb { width: 18px; height: 20px; }
.pb-wide { width: 20px; }

.track {
  position: relative;
  margin-left: 36px;
}

.tl-items {
  display: flex;
  gap: 12px;
}

.ti { width: 24px; height: 24px; flex: none; }

.tl-rail {
  width: 1046px;
  height: 10px;
  margin: 5px 0 0 12px;
  border-bottom: 3px solid #cfcfcf;
  background: repeating-linear-gradient(90deg, #cfcfcf 0 2px, transparent 2px 36px);
}

.tl-marker {
  position: absolute;
  left: 1065px;
  top: -9px;
  width: 18px;
  height: 47px;
}

.tl-gear {
  width: 24px;
  height: 24px;
  margin-left: auto;
  margin-right: 8px;
  color: #555;
}
```
